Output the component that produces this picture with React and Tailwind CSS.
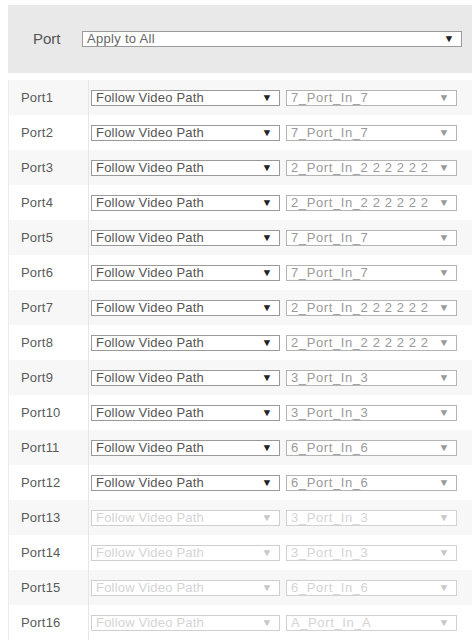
import React from 'react';

const rows = [
  { port: 'Port1', path: '7_Port_In_7' },
  { port: 'Port2', path: '7_Port_In_7' },
  { port: 'Port3', path: '2_Port_In_2 2 2 2 2 2' },
  { port: 'Port4', path: '2_Port_In_2 2 2 2 2 2' },
  { port: 'Port5', path: '7_Port_In_7' },
  { port: 'Port6', path: '7_Port_In_7' },
  { port: 'Port7', path: '2_Port_In_2 2 2 2 2 2' },
  { port: 'Port8', path: '2_Port_In_2 2 2 2 2 2' },
  { port: 'Port9', path: '3_Port_In_3' },
  { port: 'Port10', path: '3_Port_In_3' },
  { port: 'Port11', path: '6_Port_In_6' },
  { port: 'Port12', path: '6_Port_In_6' },
  { port: 'Port13', path: '3_Port_In_3', disabled: true },
  { port: 'Port14', path: '3_Port_In_3', disabled: true },
  { port: 'Port15', path: '6_Port_In_6', disabled: true },
  { port: 'Port16', path: 'A_Port_In_A', disabled: true },
];

// fake select box, looks like the old IE style dropdown
const SelectBox = ({ value, className, textClass, arrowClass }) => (
  <div className={`flex items-center justify-between h-[16px] bg-white border pl-[4px] pr-[7px] ${className}`}>
    <span className={`whitespace-nowrap leading-[14px] ${textClass}`}>{value}</span>
    <span className={`text-[10px] leading-none scale-x-110 ${arrowClass}`}>▼</span>
  </div>
);

export default function App() {
  return (
    <div className="w-[475px] h-[643px] bg-white overflow-hidden font-['Liberation_Sans',Arial,sans-serif] text-[13px]">
      {/* Apply to all header */}
      <div className="mt-[5px] ml-[8px] mr-[3px] h-[68px] bg-[#e9e9e9] flex items-center">
        <span className="w-[74px] pl-[25px] text-[15px] text-[#555]">Port</span>
        <SelectBox
          value="Apply to All"
          className="w-[380px] border-[#9a9a9a]"
          textClass="text-[#666] text-[13px] tracking-[0.3px]"
          arrowClass="text-[#222]"
        />
      </div>

      {/* Port list */}
      <div className="mt-[7px] ml-[8px] mr-[3px] border-l border-[#ececec]">
        {rows.map((row, i) => (
          <div
            key={row.port}
            className={`flex items-center h-[35px] ${i % 2 === 0 ? 'bg-[#f7f7f7]' : 'bg-white'}`}
          >
            <div className="w-[80px] h-full flex items-center pl-[12px] border-r border-[#e6e6e6] text-[#5a5a5a] tracking-[0.2px]">
              {row.port}
            </div>
            <div className="flex items-center gap-[6px] pl-[2px]">
              <SelectBox
                value="Follow Video Path"
                className={`w-[189px] ${row.disabled ? 'border-[#cfcfcf]' : 'border-[#9a9a9a]'}`}
                textClass={`tracking-[0.2px] ${row.disabled ? 'text-[#d4d4d4]' : 'text-[#555]'}`}
                arrowClass={row.disabled ? 'text-[#c8c8c8]' : 'text-[#222]'}
              />
              <SelectBox
                value={row.path}
                className={`w-[171px] ${row.disabled ? 'border-[#d2d2d2]' : 'border-[#b4b4b4]'}`}
                textClass={`tracking-[0.6px] ${row.disabled ? 'text-[#d4d4d4]' : 'text-[#9a9a9a]'}`}
                arrowClass={row.disabled ? 'text-[#c8c8c8]' : 'text-[#999]'}
              />
            </div>
          </div>
        ))}
      </div>
    </div>
  );
}
